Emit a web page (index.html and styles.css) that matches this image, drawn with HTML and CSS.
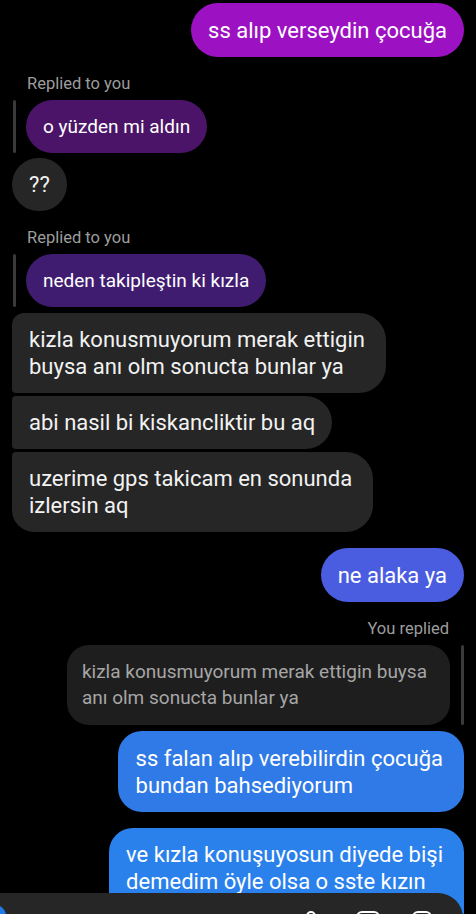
FILE: index.html
```html
<!DOCTYPE html>
<html lang="tr">
<head>
<meta charset="utf-8">
<title>Sohbet</title>
<link rel="stylesheet" href="styles.css">
</head>
<body>
<main class="thread">
  <div class="bubble sent b-magenta">ss alıp verseydin çocuğa</div>

  <div class="label">Replied to you</div>
  <div class="reply-row">
    <span class="reply-bar"></span>
    <div class="bubble replied b-plum">o yüzden mi aldın</div>
  </div>
  <div class="bubble b-gray q-gap">??</div>

  <div class="label">Replied to you</div>
  <div class="reply-row">
    <span class="reply-bar"></span>
    <div class="bubble replied b-violet">neden takipleştin ki kızla</div>
  </div>

  <div class="bubble multi b-gray g-first">kizla konusmuyorum merak ettigin<br>buysa anı olm sonucta bunlar ya</div>
  <div class="bubble b-gray g-mid">abi nasil bi kiskancliktir bu aq</div>
  <div class="bubble multi b-gray g-last">uzerime gps takicam en sonunda<br>izlersin aq</div>

  <div class="bubble sent b-indigo gap-lg">ne alaka ya</div>

  <div class="label label-right">You replied</div>
  <div class="quote-row">
    <div class="quote">kizla konusmuyorum merak ettigin buysa<br>anı olm sonucta bunlar ya</div>
    <span class="reply-bar"></span>
  </div>

  <div class="bubble multi sent b-blue blue-first">ss falan alıp verebilirdin çocuğa<br>bundan bahsediyorum</div>
  <div class="bubble multi sent b-blue2 gap-lg">ve kızla konuşuyosun diyede bişi<br>demedim öyle olsa o sste kızın<br>&nbsp;</div>
</main>

<div class="composer">
  <span class="camera"></span>
  <svg class="icon icon-mic" width="22" height="24" viewBox="0 0 22 24" fill="none" stroke="#fff" stroke-width="2">
    <rect x="7" y="1" width="8" height="14" rx="4"/>
  </svg>
  <svg class="icon icon-gallery" width="24" height="24" viewBox="0 0 24 24" fill="none" stroke="#fff" stroke-width="2">
    <rect x="1" y="1" width="22" height="20" rx="5"/>
  </svg>
  <svg class="icon icon-sticker" width="20" height="24" viewBox="0 0 20 24" fill="none" stroke="#fff" stroke-width="2">
    <rect x="1" y="1" width="18" height="18" rx="5"/>
  </svg>
</div>
</body>
</html>
```

FILE: styles.css
```css
* { box-sizing: border-box; }

html, body {
  margin: 0;
  padding: 0;
  background: #000;
  height: 914px;
  overflow: hidden;
}

.thread {
  display: flex;
  flex-direction: column;
  align-items: flex-start;
  padding: 3px 12px 0 12px;
  font-family: Roboto, "Noto Sans", sans-serif;
}

.bubble {
  font-size: 22px;
  line-height: 27px;
  color: #fff;
  padding: 13px 17px;
  border-radius: 27px;
  white-space: nowrap;
}

.bubble.replied { font-size: 19px; }

.bubble.multi { padding-right: 21px; }

.sent { align-self: flex-end; }

.b-magenta { background: #9c12c2; padding-top: 14px; }
.b-plum { background: #4b1468; }
.b-violet { background: #3f1c70; }
.b-gray { background: #262626; color: #f2f2f2; }
.b-indigo { background: #4a5ce0; padding-top: 14px; }
.b-blue { background: #2f7ae7; border-radius: 24px; padding-top: 14px; padding-left: 18px; }
.b-blue2 { background: #2b81ec; border-radius: 24px; }

.label {
  font-size: 16.5px;
  line-height: 20px;
  color: #9d9d9d;
  margin-top: 17px;
  padding-left: 15px;
}

.label-right {
  align-self: flex-end;
  padding-left: 0;
  margin-right: 15px;
}

.reply-row {
  display: flex;
  gap: 10px;
  margin-top: 6px;
  padding-left: 1px;
}

.reply-bar {
  width: 3px;
  border-radius: 2px;
  background: #3a3a3a;
  flex: none;
}

.q-gap { margin-top: 5px; }

.g-first { margin-top: 6px; border-radius: 12px 27px 27px 4px; }
.g-mid { margin-top: 3px; border-radius: 4px 27px 27px 4px; }
.g-last { margin-top: 3px; border-radius: 4px 27px 27px 22px; }

.gap-lg { margin-top: 16px; }

.quote-row {
  align-self: flex-end;
  display: flex;
  gap: 11px;
  margin-top: 6px;
}

.quote {
  background: #1e1e1e;
  color: #a6a6a6;
  font-size: 19px;
  line-height: 26px;
  padding: 14px 23px 14px 15px;
  border-radius: 22px;
  white-space: nowrap;
}

.blue-first { margin-top: 6px; }

.composer {
  position: fixed;
  top: 893px;
  left: -30px;
  width: 493px;
  height: 50px;
  border-radius: 25px;
  background: #262626;
  display: flex;
  align-items: flex-start;
  justify-content: flex-end;
  padding: 18px 31px 0 0;
}

.camera {
  position: absolute;
  left: 14px;
  top: 12px;
  width: 22px;
  height: 22px;
  border-radius: 50%;
  background: #1f7ce6;
}

.icon { display: block; flex: none; }
.icon-mic { margin-right: 34px; }
.icon-gallery { margin-right: 32px; }
```
